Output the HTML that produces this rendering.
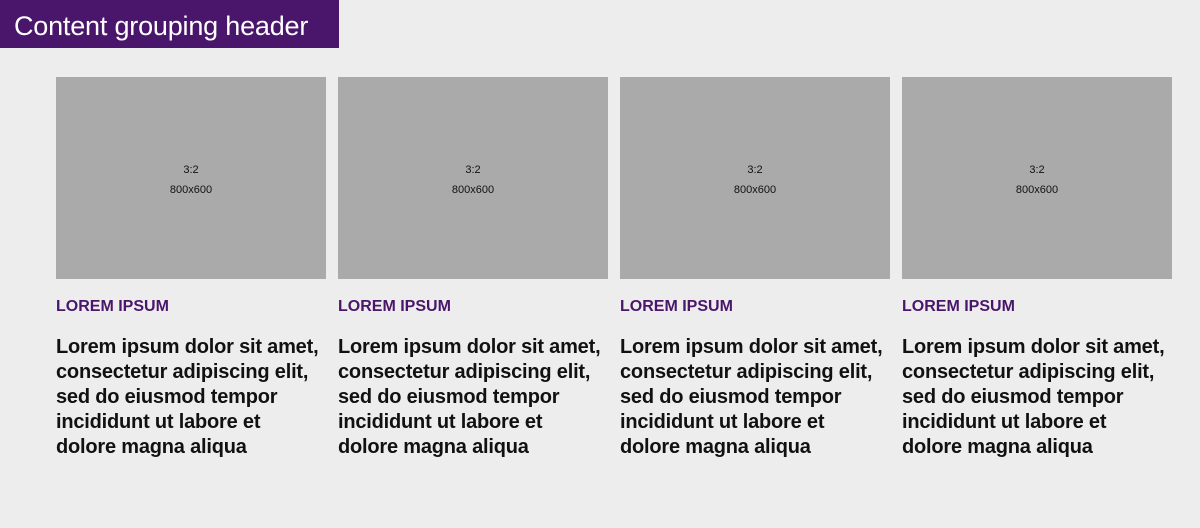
<!DOCTYPE html>
<html><head><meta charset="utf-8"><style>
body{margin:0;width:1200px;height:528px;background:#ededed;font-family:"Liberation Sans",sans-serif;position:relative;overflow:hidden}
.hdr{position:absolute;left:0;top:0;width:339px;height:48px;background:#4a166b;color:#fff;font-size:27px;line-height:52px;padding-left:14px;box-sizing:border-box;letter-spacing:-0.2px;white-space:nowrap}
.card{position:absolute;top:77px;width:270px}
.img{width:270px;height:202px;background:#aaa;text-align:center;font-size:11px;color:#111;padding-top:83px;box-sizing:border-box;line-height:20px}
.lab{margin-top:19px;color:#4a166b;font-weight:bold;font-size:16px;height:20px}
.txt{margin-top:17px;font-weight:bold;font-size:20px;line-height:25px;color:#111;white-space:nowrap;letter-spacing:-0.2px}
</style></head><body>
<div class="hdr">Content grouping header</div>
<div class="card" style="left:56px"><div class="img">3:2<br>800x600</div><div class="lab">LOREM IPSUM</div><div class="txt">Lorem ipsum dolor sit amet,<br>consectetur adipiscing elit,<br>sed do eiusmod tempor<br>incididunt ut labore et<br>dolore magna aliqua</div></div>
<div class="card" style="left:338px"><div class="img">3:2<br>800x600</div><div class="lab">LOREM IPSUM</div><div class="txt">Lorem ipsum dolor sit amet,<br>consectetur adipiscing elit,<br>sed do eiusmod tempor<br>incididunt ut labore et<br>dolore magna aliqua</div></div>
<div class="card" style="left:620px"><div class="img">3:2<br>800x600</div><div class="lab">LOREM IPSUM</div><div class="txt">Lorem ipsum dolor sit amet,<br>consectetur adipiscing elit,<br>sed do eiusmod tempor<br>incididunt ut labore et<br>dolore magna aliqua</div></div>
<div class="card" style="left:902px"><div class="img">3:2<br>800x600</div><div class="lab">LOREM IPSUM</div><div class="txt">Lorem ipsum dolor sit amet,<br>consectetur adipiscing elit,<br>sed do eiusmod tempor<br>incididunt ut labore et<br>dolore magna aliqua</div></div>
</body></html>
